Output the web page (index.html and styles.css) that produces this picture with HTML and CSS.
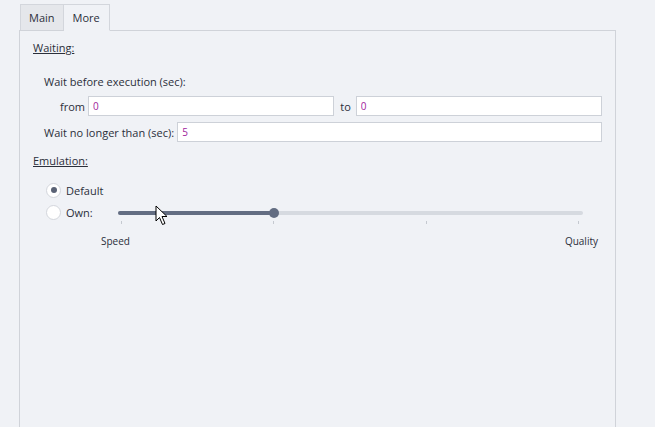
FILE: index.html
```html
<!DOCTYPE html>
<html lang="en">
<head>
    <meta charset="UTF-8">
    <title>More</title>
    <link rel="stylesheet" href="styles.css">
</head>
<body>
    <div class="window">
        <div class="tabs">
            <div class="tab">Main</div>
            <div class="tab active">More</div>
        </div>

        <div class="panel">
            <div class="section-title">Waiting:</div>

            <div class="row label-row">Wait before execution (sec):</div>

            <div class="row input-row from-row">
                <span class="field-label">from</span>
                <input class="field" type="text" value="0">
                <span class="field-label to">to</span>
                <input class="field" type="text" value="0">
            </div>

            <div class="row input-row">
                <span class="field-label">Wait no longer than (sec):</span>
                <input class="field" type="text" value="5">
            </div>

            <div class="section-title emulation">Emulation:</div>

            <div class="row radio-row first">
                <span class="radio checked"></span>
                <span>Default</span>
            </div>

            <div class="row radio-row">
                <span class="radio"></span>
                <span class="own-label">Own:</span>
                <div class="slider">
                    <div class="track"></div>
                    <div class="track-fill"></div>
                    <div class="knob"></div>
                </div>
            </div>

            <div class="ticks">
                <span></span><span></span><span></span><span></span>
            </div>

            <div class="slider-labels">
                <span>Speed</span>
                <span>Quality</span>
            </div>
        </div>

        <!-- mouse pointer over the slider -->
        <svg class="cursor" width="14" height="22" viewBox="0 0 14 22">
            <path d="M1 1 L1 16 L4.5 12.5 L7.5 19.5 L10 18.5 L7 11.5 L12 11.5 Z" fill="#fff" stroke="#000" stroke-width="1" stroke-linejoin="round"/>
        </svg>
    </div>
</body>
</html>
```

FILE: styles.css
```css
* {
    margin: 0;
    padding: 0;
    box-sizing: border-box;
}

body {
    font-family: 'Open Sans', 'Noto Sans', sans-serif;
    font-size: 11px;
    color: #2b2f3a;
    background: #f0f2f6;
    overflow: hidden;
}

.window {
    position: relative;
    padding: 3px 0 0 19px;
    width: 616px;
}

.tabs {
    display: flex;
    align-items: flex-end;
    margin-left: 1px;
    height: 27px;
}

.tab {
    height: 26px;
    padding: 0 8px;
    display: flex;
    align-items: center;
    background: #e5e7eb;
    border: 1px solid #d3d6dc;
    border-bottom: none;
    color: #2b2f3a;
}

.tab.active {
    height: 27px;
    padding: 0 9px;
    background: #f0f2f6;
    border-left: none;
    margin-bottom: -1px;
    position: relative;
    z-index: 1;
    border-bottom: 1px solid #f0f2f6;
}

.panel {
    border: 1px solid #d0d3d9;
    border-bottom: none;
    height: 397px;
    padding: 8px 13px 0 13px;
}

.section-title {
    height: 18px;
    line-height: 18px;
    text-decoration: underline;
}

.section-title.emulation {
    margin-top: 10px;
}

.row {
    display: flex;
    align-items: center;
}

.label-row {
    margin-top: 15px;
    height: 18px;
    padding-left: 11px;
}

.input-row {
    margin-top: 6px;
    height: 20px;
    padding-left: 11px;
}

.from-row {
    padding-left: 27px;
}

.field-label {
    margin-right: 3px;
    white-space: nowrap;
}

.field-label.to {
    margin-left: 6px;
    margin-right: 5px;
}

.field {
    flex: 1;
    min-width: 0;
    height: 20px;
    border: 1px solid #cdd1d8;
    background: #fff;
    padding: 0 4px;
    font-family: 'Open Sans', sans-serif;
    font-size: 10px;
    color: #a0229c;
    outline: none;
}

.radio-row {
    height: 18px;
    padding-left: 13px;
    margin-top: 4px;
}

.radio-row.first {
    margin-top: 11px;
}

.radio {
    width: 15px;
    height: 15px;
    border-radius: 50%;
    border: 1px solid #d3d6dc;
    background: #fff;
    margin-right: 5px;
    display: flex;
    align-items: center;
    justify-content: center;
}

.radio.checked::after {
    content: '';
    width: 6px;
    height: 6px;
    border-radius: 50%;
    background: #5a6275;
}

.own-label {
    width: 52px;
}

.slider {
    position: relative;
    width: 465px;
    height: 18px;
}

.track {
    position: absolute;
    left: 0;
    right: 0;
    top: 8px;
    height: 4px;
    border-radius: 2px;
    background: #d6dae0;
}

.track-fill {
    position: absolute;
    left: 0;
    top: 8px;
    width: 157px;
    height: 4px;
    border-radius: 2px;
    background: #636d82;
}

.knob {
    position: absolute;
    left: 151px;
    top: 5px;
    width: 10px;
    height: 10px;
    border-radius: 50%;
    background: #636d82;
}

.ticks {
    display: flex;
    justify-content: space-between;
    width: 458px;
    margin-left: 88px;
    height: 3px;
}

.ticks span {
    width: 1px;
    height: 3px;
    background: #c5c9d0;
}

.slider-labels {
    display: flex;
    justify-content: space-between;
    width: 497px;
    margin-left: 68px;
    margin-top: 10px;
    font-size: 10px;
}

.cursor {
    position: absolute;
    left: 155px;
    top: 205px;
}
```
